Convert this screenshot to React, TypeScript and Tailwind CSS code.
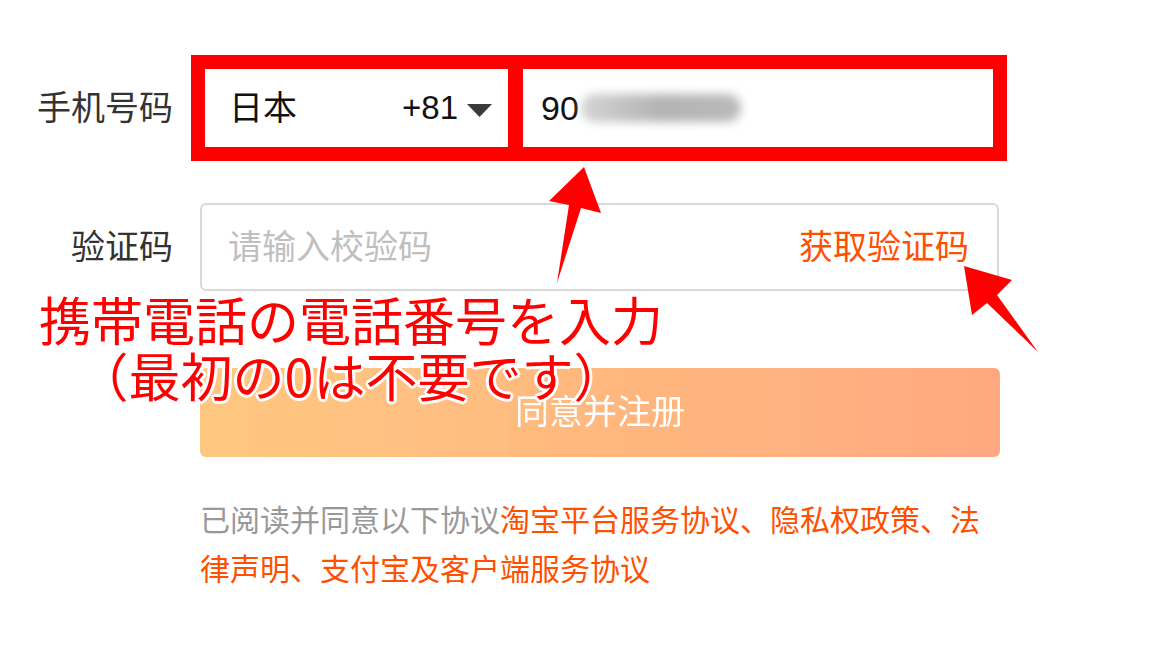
export default function App() {
  return (
    <div className="relative w-[1170px] h-[672px] overflow-hidden bg-white font-['Liberation_Sans','Noto_Sans_CJK_SC',sans-serif]">
      <div className="pt-[55px]">
        {/* phone row */}
        <div className="flex items-center h-[106px]">
          <div className="w-[173px] text-right text-[34px] text-[#333]">手机号码</div>
          <div className="ml-[18px] w-[331px] h-[106px] border-[14px] border-[#ff0000] flex items-center pl-[24px] pr-[16px]">
            <span className="text-[34px] text-[#111]">日本</span>
            <span className="ml-auto text-[33px] text-[#111]">+81</span>
            <svg width="25" height="14" viewBox="0 0 25 14" className="ml-[9px] mt-[6px] blur-[0.6px]">
              <polygon points="0,0 25,0 12.5,13" fill="#3a3a3a" />
            </svg>
          </div>
          <div className="-ml-[13px] w-[498px] h-[106px] border-[14px] border-[#ff0000] flex items-center pl-[18px]">
            <span className="text-[34px] text-[#111]">90</span>
            <div className="ml-[2px] w-[160px] h-[28px] rounded-full bg-linear-to-r from-[#d4d4d4] via-[#b4b4b4] to-[#bababa] blur-[5px]" />
          </div>
        </div>

        {/* code row */}
        <div className="mt-[42px] flex items-center h-[88px]">
          <div className="w-[173px] text-right text-[34px] text-[#333]">验证码</div>
          <div className="ml-[27px] w-[799px] h-[88px] border-2 border-[#d9d9d9] rounded-[6px] flex items-center justify-between pl-[26px] pr-[28px]">
            <span className="text-[34px] text-[#bfbfbf]">请输入校验码</span>
            <span className="text-[34px] text-[#ff5000]">获取验证码</span>
          </div>
        </div>

        {/* submit */}
        <div className="mt-[77px] ml-[200px] w-[800px] h-[89px] rounded-[6px] bg-linear-to-r from-[#ff9000] to-[#ff5000] opacity-50 flex items-center justify-center text-[34px] text-white">
          同意并注册
        </div>

        {/* agreement */}
        <p className="mt-[39px] ml-[200px] w-[800px] text-[30px] leading-[49px] text-[#999]">
          已阅读并同意以下协议<span className="text-[#ff5000]">淘宝平台服务协议、隐私权政策、法律声明、支付宝及客户端服务协议</span>
        </p>
      </div>

      {/* annotation arrows */}
      <svg className="absolute inset-0 pointer-events-none" width="1170" height="672" viewBox="0 0 1170 672">
        <polygon points="584,167 601,213 581,208 557,283 569,205 549,201" fill="#ff0000" />
        <polygon points="964,266 1012,280 997,295 1038,352 987,303 972,315" fill="#ff0000" />
      </svg>

      {/* annotation text */}
      <div className="absolute left-0 top-[291px] w-[702px] text-center text-[52px] leading-[56px] text-[#ff0000] font-['Noto_Sans_CJK_JP',sans-serif] [text-shadow:3px_0_0_#fff,-3px_0_0_#fff,0_3px_0_#fff,0_-3px_0_#fff,2px_2px_0_#fff,-2px_-2px_0_#fff,2px_-2px_0_#fff,-2px_2px_0_#fff]">
        <div>携帯電話の電話番号を入力</div>
        <div>（最初の0は不要です）</div>
      </div>
    </div>
  );
}
